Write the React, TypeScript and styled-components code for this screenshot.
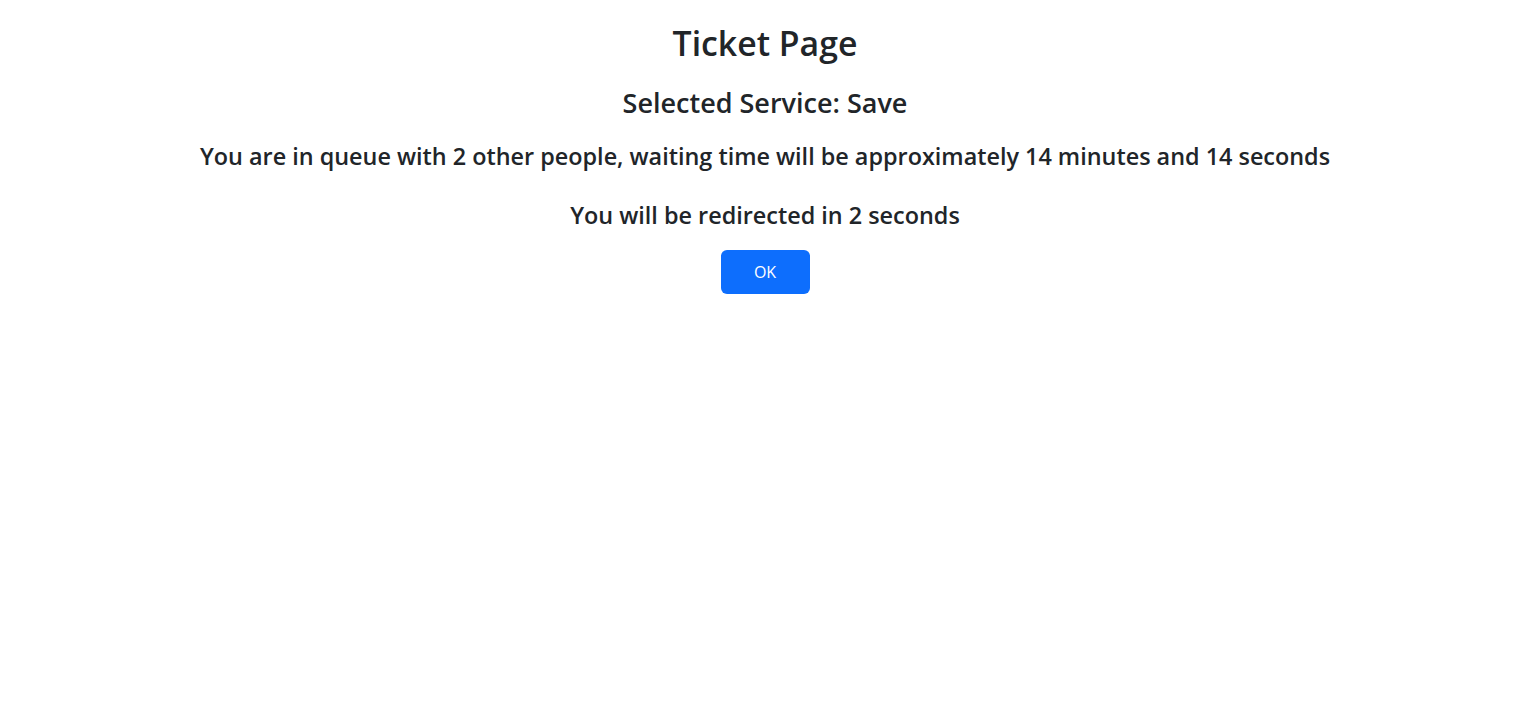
import React from "react";
import styled, { createGlobalStyle } from "styled-components";

const Global = createGlobalStyle`
  html, body { margin: 0; padding: 0; background: #fff; }
  body { font-family: "Open Sans", "Noto Sans", sans-serif; color: #212529; }
`;

const Page = styled.main`
  display: flex;
  flex-direction: column;
  align-items: center;
  padding: 24px 9px 0 0;
  text-align: center;
`;

const Title = styled.h2`
  margin: 0 0 24px;
  font-size: 33.8px;
  font-weight: 600;
  line-height: 38px;
`;

const Service = styled.h3`
  margin: 0 0 22px;
  font-size: 27px;
  font-weight: 600;
  line-height: 34px;
`;

const Info = styled.h4<{ $gap: number }>`
  margin: 0 0 ${(p) => p.$gap}px;
  font-size: 23.4px;
  font-weight: 600;
  line-height: 28px;
`;

const OkButton = styled.button`
  width: 89px;
  height: 44px;
  border: none;
  border-radius: 6px;
  background: #0d6efd;
  color: #fff;
  font-family: "Open Sans", sans-serif;
  font-size: 16px;
  cursor: pointer;
`;

export default function App() {
  return (
    <>
      <Global />
      <Page>
        <Title>Ticket Page</Title>
        <Service>Selected Service: Save</Service>
        <Info $gap={31}>
          You are in queue with 2 other people, waiting time will be approximately 14 minutes and 14 seconds
        </Info>
        <Info $gap={21}>You will be redirected in 2 seconds</Info>
        <OkButton>OK</OkButton>
      </Page>
    </>
  );
}
